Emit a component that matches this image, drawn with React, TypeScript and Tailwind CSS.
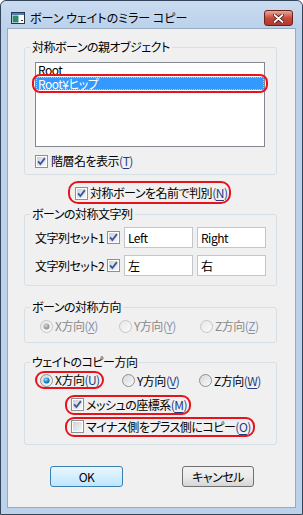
import { useId, type ReactNode } from 'react';

function useSvgId() {
  return useId().replace(/[^a-zA-Z0-9]/g, '');
}

function Check({ checked }: { checked?: boolean }) {
  const id = useSvgId();
  return (
    <svg width="13" height="13" viewBox="0 0 13 13" className="shrink-0">
      <defs>
        <linearGradient id={id} x1="0" y1="0" x2="1" y2="1">
          <stop offset="0" stopColor="#cdd1d7" />
          <stop offset="1" stopColor="#f7f7f7" />
        </linearGradient>
      </defs>
      <rect x="0.5" y="0.5" width="12" height="12" fill="#fff" stroke="#8e8f8f" />
      <rect x="2" y="2" width="9" height="9" fill={`url(#${id})`} />
      {checked && (
        <path d="M3.1 6.4 L5.4 9.1 L9.9 3.2" fill="none" stroke="#40589a" strokeWidth="1.9" />
      )}
    </svg>
  );
}

function Radio({ checked, disabled }: { checked?: boolean; disabled?: boolean }) {
  const id = useSvgId();
  return (
    <svg width="13" height="13" viewBox="0 0 13 13" className="shrink-0">
      <defs>
        <linearGradient id={id + 'b'} x1="0" y1="0" x2="1" y2="1">
          <stop offset="0" stopColor={disabled ? '#e6e6e6' : '#d3d6db'} />
          <stop offset="1" stopColor="#fbfbfb" />
        </linearGradient>
        <radialGradient id={id + 'd'} cx="0.4" cy="0.35" r="0.75">
          <stop offset="0" stopColor={disabled ? '#d8d8d8' : '#a6e6ff'} />
          <stop offset="0.5" stopColor={disabled ? '#a4a4a4' : '#1f8fd3'} />
          <stop offset="1" stopColor={disabled ? '#8a8a8a' : '#0b477f'} />
        </radialGradient>
      </defs>
      <circle cx="6.5" cy="6.5" r="6" fill={`url(#${id}b)`} stroke={disabled ? '#c4c4c4' : '#8e8f8f'} />
      {checked && <circle cx="6.5" cy="6.5" r="3" fill={`url(#${id}d)`} />}
    </svg>
  );
}

function Key({ k, disabled }: { k: string; disabled?: boolean }) {
  return (
    <span className={disabled ? 'text-[#8793ad]' : 'text-[#1f3c84]'}>
      (<span className="underline underline-offset-[2px]">{k}</span>)
    </span>
  );
}

function Mark({ className }: { className: string }) {
  // red annotation drawn over the item
  return <span className={`pointer-events-none absolute border-2 border-[#e8121b] rounded-[8px] ${className}`} />;
}

function Group({ title, className, children }: { title: string; className: string; children: ReactNode }) {
  return (
    <fieldset className={`ml-[16px] w-[253px] m-0 p-0 border border-[#d5dfe5] rounded-[3px] ${className}`}>
      <legend className="ml-[5px] px-[2px] leading-[14px]">{title}</legend>
      {children}
    </fieldset>
  );
}

function TextBox({ value }: { value: string }) {
  return (
    <div className="w-[69px] h-[21px] border border-[#c3c7cd] bg-white pl-[3px] leading-[19px]">{value}</div>
  );
}

export default function App() {
  return (
    <div className="w-[303px] h-[515px] flex flex-col bg-[#bcd2eb] border border-[#34445a] rounded-t-[6px] text-[12px] tracking-[-0.5px] text-black whitespace-nowrap font-['Noto_Sans_CJK_JP','Noto_Sans',sans-serif] [font-feature-settings:'palt']">
      {/* title bar */}
      <div className="h-[27px] pt-[7px] flex items-center bg-gradient-to-b from-[#c9dbf0] to-[#bcd2eb] rounded-t-[6px]">
        <svg width="14" height="12" viewBox="0 0 14 12" className="ml-[10px] shrink-0">
          <rect x="0.5" y="0.5" width="13" height="11" fill="#fff" stroke="#2b3442" />
          <rect x="1" y="1" width="12" height="2" fill="#4d7fb8" />
          <rect x="1.5" y="3.5" width="6" height="7" fill="#2e8a73" />
          <rect x="10" y="8" width="2" height="1" fill="#333" />
        </svg>
        <span className="ml-[5px] leading-[16px] tracking-[0px]">ボーン ウェイトのミラー コピー</span>
        <div className="ml-auto mr-[9px] w-[29px] h-[16px] rounded-[3px] border border-[#6b2219] bg-gradient-to-b from-[#e5a89c] via-[#c8483c] to-[#b0392d] flex items-center justify-center">
          <svg width="11" height="9" viewBox="0 0 11 9">
            <path d="M1.5 1 L9.5 8 M9.5 1 L1.5 8" stroke="#3d1510" strokeWidth="3.4" strokeLinecap="round" />
            <path d="M1.5 1 L9.5 8 M9.5 1 L1.5 8" stroke="#fff" strokeWidth="1.8" strokeLinecap="round" />
          </svg>
        </div>
      </div>

      {/* client area */}
      <div className="ml-[6px] mr-[6px] mb-[6px] flex-1 flex flex-col border border-[#98aac0] bg-[#f0f0f0]">
        <Group title="対称ボーンの親オブジェクト" className="mt-[11px] pb-[6px]">
          <div className="ml-[10px] mt-[8px] w-[230px] h-[85px] border border-[#828790] bg-white">
            <div className="h-[14px] leading-[14px] pl-[2px]">Root</div>
            <div className="relative h-[13px] leading-[11px] pl-[1px] bg-[#3399ff] text-white border border-dotted border-[#e0c58e]">
              Root¥ヒップ
              <Mark className="-left-[5px] -right-[5px] -top-[4px] -bottom-[4px]" />
            </div>
          </div>
          <div className="ml-[10px] mt-[7px] flex items-center gap-[3px] leading-[14px]">
            <Check checked />
            <span>
              階層名を表示<Key k="T" />
            </span>
          </div>
        </Group>

        <div className="relative self-start ml-[67px] mt-[11px] flex items-center gap-[2px] leading-[14px]">
          <Check checked />
          <span>
            対称ボーンを名前で判別<Key k="N" />
          </span>
          <Mark className="-left-[7px] -right-[4px] -top-[5px] -bottom-[4px] rounded-[10px]" />
        </div>

        <Group title="ボーンの対称文字列" className="mt-[7px] pb-[9px]">
          <div className="ml-[10px] mt-[6px] flex items-center">
            <span className="w-[72px]">文字列セット1</span>
            <Check checked />
            <div className="ml-[4px] flex gap-[4px]">
              <TextBox value="Left" />
              <TextBox value="Right" />
            </div>
          </div>
          <div className="ml-[10px] mt-[7px] flex items-center">
            <span className="w-[72px]">文字列セット2</span>
            <Check checked />
            <div className="ml-[4px] flex gap-[4px]">
              <TextBox value="左" />
              <TextBox value="右" />
            </div>
          </div>
        </Group>

        <Group title="ボーンの対称方向" className="mt-[14px] pb-[9px]">
          <div className="ml-[15px] mt-[5px] flex items-center leading-[14px] text-[#8a8a8a]">
            <div className="w-[79px] flex items-center gap-[2px]">
              <Radio checked disabled />
              <span>
                X方向<Key k="X" disabled />
              </span>
            </div>
            <div className="w-[81px] flex items-center gap-[2px]">
              <Radio disabled />
              <span>
                Y方向<Key k="Y" disabled />
              </span>
            </div>
            <div className="flex items-center gap-[2px]">
              <Radio disabled />
              <span>
                Z方向<Key k="Z" disabled />
              </span>
            </div>
          </div>
        </Group>

        <Group title="ウェイトのコピー方向" className="mt-[12px] pb-[10px]">
          <div className="ml-[15px] mt-[4px] flex items-center leading-[14px]">
            <div className="w-[82px]">
              <div className="relative inline-flex items-center gap-[2px]">
                <Radio checked />
                <span>
                  X方向<Key k="U" />
                </span>
                <Mark className="-left-[5px] -right-[4px] -top-[2px] -bottom-[2px] rounded-[9px]" />
              </div>
            </div>
            <div className="w-[77px] flex items-center gap-[2px]">
              <Radio />
              <span>
                Y方向<Key k="V" />
              </span>
            </div>
            <div className="flex items-center gap-[2px]">
              <Radio />
              <span>
                Z方向<Key k="W" />
              </span>
            </div>
          </div>
          <div className="ml-[46px] mt-[9px] flex">
            <div className="relative flex items-center gap-[2px] leading-[14px]">
              <Check checked />
              <span>
                メッシュの座標系<Key k="M" />
              </span>
              <Mark className="-left-[6px] -right-[4px] -top-[3px] -bottom-[3px] rounded-[9px]" />
            </div>
          </div>
          <div className="ml-[46px] mt-[8px] flex">
            <div className="relative flex items-center gap-[2px] leading-[14px]">
              <Check />
              <span>
                マイナス側をプラス側にコピー<Key k="O" />
              </span>
              <Mark className="-left-[6px] -right-[4px] -top-[3px] -bottom-[3px] rounded-[9px]" />
            </div>
          </div>
        </Group>

        <div className="ml-[42px] mt-[21px] flex gap-[59px]">
          <button className="w-[73px] h-[21px] rounded-[3px] border border-[#3c7fb1] bg-gradient-to-b from-[#eaf6fd] to-[#bee6fd] leading-[19px]">
            OK
          </button>
          <button className="w-[72px] h-[21px] rounded-[3px] border border-[#707070] bg-gradient-to-b from-[#f2f2f2] via-[#ebebeb] to-[#d6d6d6] leading-[19px]">
            キャンセル
          </button>
        </div>
      </div>
    </div>
  );
}
